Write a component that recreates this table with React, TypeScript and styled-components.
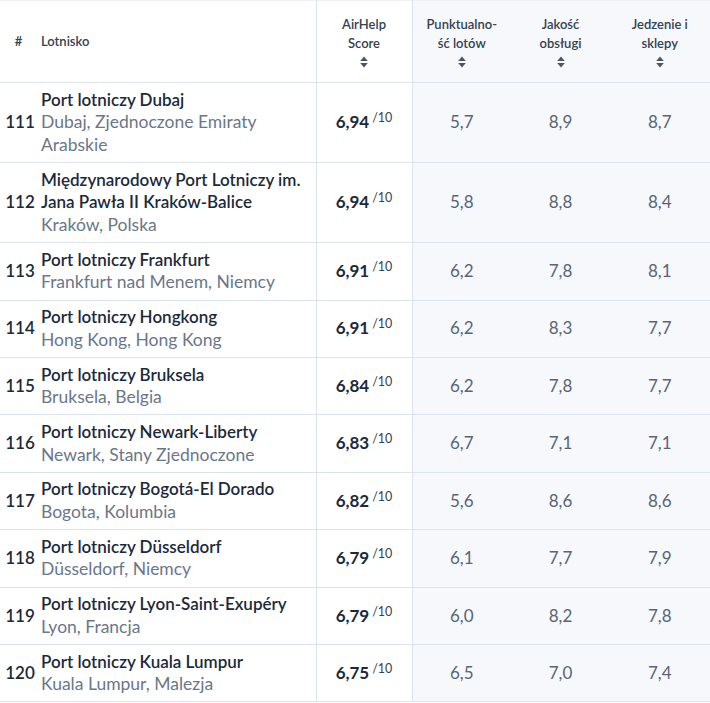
import React from 'react'
import styled, { createGlobalStyle } from 'styled-components'

const GlobalStyle = createGlobalStyle`
  html, body {
    margin: 0;
    padding: 0;
    background: #ffffff;
  }
  body {
    font-family: 'Lato', 'Noto Sans', sans-serif;
  }
`

const colors = {
  ink: '#1b2a3b',
  muted: '#6a7789',
  cell: '#586577',
  head: '#35414f',
  line: '#dbe3ef',
  tint: '#f6f8fb',
}

const Table = styled.table`
  width: 710px;
  border-collapse: collapse;
  table-layout: fixed;
  border-top: 1px solid #eef1f6;
`
const HeadCell = styled.th<{ $align?: string; $tint?: boolean; $divider?: boolean }>`
  height: 81px;
  padding: 0 4px;
  font-size: 13px;
  font-weight: 600;
  line-height: 19px;
  color: ${colors.head};
  text-align: ${p => p.$align || 'center'};
  vertical-align: middle;
  background: ${p => (p.$tint ? colors.tint : '#ffffff')};
  border-bottom: 1px solid ${colors.line};
  border-left: ${p => (p.$divider ? `1px solid ${colors.line}` : 'none')};
  &:last-child {
    border-right: 1px solid ${colors.line};
  }
`
const HeadLabel = styled.div`
  display: flex;
  flex-direction: column;
  align-items: center;
  gap: 3px;
`
const Cell = styled.td<{ $tint?: boolean; $divider?: boolean }>`
  padding: 5.5px 0;
  line-height: 22.7px;
  font-size: 17px;
  text-align: center;
  vertical-align: middle;
  color: ${colors.cell};
  background: ${p => (p.$tint ? colors.tint : '#ffffff')};
  border-bottom: 1px solid ${colors.line};
  border-left: ${p => (p.$divider ? `1px solid ${colors.line}` : 'none')};
  &:last-child {
    border-right: 1px solid ${colors.line};
  }
`
const RankCell = styled(Cell)`
  font-weight: 600;
  color: ${colors.ink};
  padding-left: 3px;
`
const NameCell = styled(Cell)`
  text-align: left;
  padding-left: 4px;
  padding-right: 8px;
`
const AirportName = styled.div`
  font-weight: 600;
  color: ${colors.ink};
`
const AirportCity = styled.div`
  font-size: 17.5px;
  color: ${colors.muted};
`
const Score = styled.span`
  font-weight: 700;
  color: ${colors.ink};
`
const ScoreMax = styled.sup`
  font-size: 12.5px;
  font-weight: 400;
  color: ${colors.head};
  margin-left: 3px;
  vertical-align: 6px;
  line-height: 0;
`

function SortIcon() {
  return (
    <svg width="8" height="12" viewBox="0 0 8 12">
      <path d="M4 0.5 L7.8 5 L0.2 5 Z" fill="#4b5564" />
      <path d="M4 11.5 L7.8 7 L0.2 7 Z" fill="#4b5564" />
    </svg>
  )
}

type Row = {
  rank: number
  name: string
  city: string
  score: string
  punctuality: string
  service: string
  food: string
}

const rows: Row[] = [
  { rank: 111, name: 'Port lotniczy Dubaj', city: 'Dubaj, Zjednoczone Emiraty Arabskie', score: '6,94', punctuality: '5,7', service: '8,9', food: '8,7' },
  { rank: 112, name: 'Międzynarodowy Port Lotniczy im. Jana Pawła II Kraków-Balice', city: 'Kraków, Polska', score: '6,94', punctuality: '5,8', service: '8,8', food: '8,4' },
  { rank: 113, name: 'Port lotniczy Frankfurt', city: 'Frankfurt nad Menem, Niemcy', score: '6,91', punctuality: '6,2', service: '7,8', food: '8,1' },
  { rank: 114, name: 'Port lotniczy Hongkong', city: 'Hong Kong, Hong Kong', score: '6,91', punctuality: '6,2', service: '8,3', food: '7,7' },
  { rank: 115, name: 'Port lotniczy Bruksela', city: 'Bruksela, Belgia', score: '6,84', punctuality: '6,2', service: '7,8', food: '7,7' },
  { rank: 116, name: 'Port lotniczy Newark-Liberty', city: 'Newark, Stany Zjednoczone', score: '6,83', punctuality: '6,7', service: '7,1', food: '7,1' },
  { rank: 117, name: 'Port lotniczy Bogotá-El Dorado', city: 'Bogota, Kolumbia', score: '6,82', punctuality: '5,6', service: '8,6', food: '8,6' },
  { rank: 118, name: 'Port lotniczy Düsseldorf', city: 'Düsseldorf, Niemcy', score: '6,79', punctuality: '6,1', service: '7,7', food: '7,9' },
  { rank: 119, name: 'Port lotniczy Lyon-Saint-Exupéry', city: 'Lyon, Francja', score: '6,79', punctuality: '6,0', service: '8,2', food: '7,8' },
  { rank: 120, name: 'Port lotniczy Kuala Lumpur', city: 'Kuala Lumpur, Malezja', score: '6,75', punctuality: '6,5', service: '7,0', food: '7,4' },
]

export default function App() {
  return (
    <>
      <GlobalStyle />
      <Table>
        <colgroup>
          <col style={{ width: 37 }} />
          <col style={{ width: 279 }} />
          <col style={{ width: 96 }} />
          <col style={{ width: 99 }} />
          <col style={{ width: 99 }} />
          <col style={{ width: 100 }} />
        </colgroup>
        <thead>
          <tr>
            <HeadCell>#</HeadCell>
            <HeadCell $align="left">Lotnisko</HeadCell>
            <HeadCell $divider>
              <HeadLabel>
                <span>AirHelp<br />Score</span>
                <SortIcon />
              </HeadLabel>
            </HeadCell>
            <HeadCell $divider $tint>
              <HeadLabel>
                <span>Punktualno-<br />ść lotów</span>
                <SortIcon />
              </HeadLabel>
            </HeadCell>
            <HeadCell $tint>
              <HeadLabel>
                <span>Jakość<br />obsługi</span>
                <SortIcon />
              </HeadLabel>
            </HeadCell>
            <HeadCell $tint>
              <HeadLabel>
                <span>Jedzenie i<br />sklepy</span>
                <SortIcon />
              </HeadLabel>
            </HeadCell>
          </tr>
        </thead>
        <tbody>
          {rows.map(r => (
            <tr key={r.rank}>
              <RankCell>{r.rank}</RankCell>
              <NameCell>
                <AirportName>{r.name}</AirportName>
                <AirportCity>{r.city}</AirportCity>
              </NameCell>
              <Cell $divider>
                <Score>{r.score}</Score>
                <ScoreMax>/10</ScoreMax>
              </Cell>
              <Cell $divider $tint>{r.punctuality}</Cell>
              <Cell $tint>{r.service}</Cell>
              <Cell $tint>{r.food}</Cell>
            </tr>
          ))}
        </tbody>
      </Table>
    </>
  )
}
